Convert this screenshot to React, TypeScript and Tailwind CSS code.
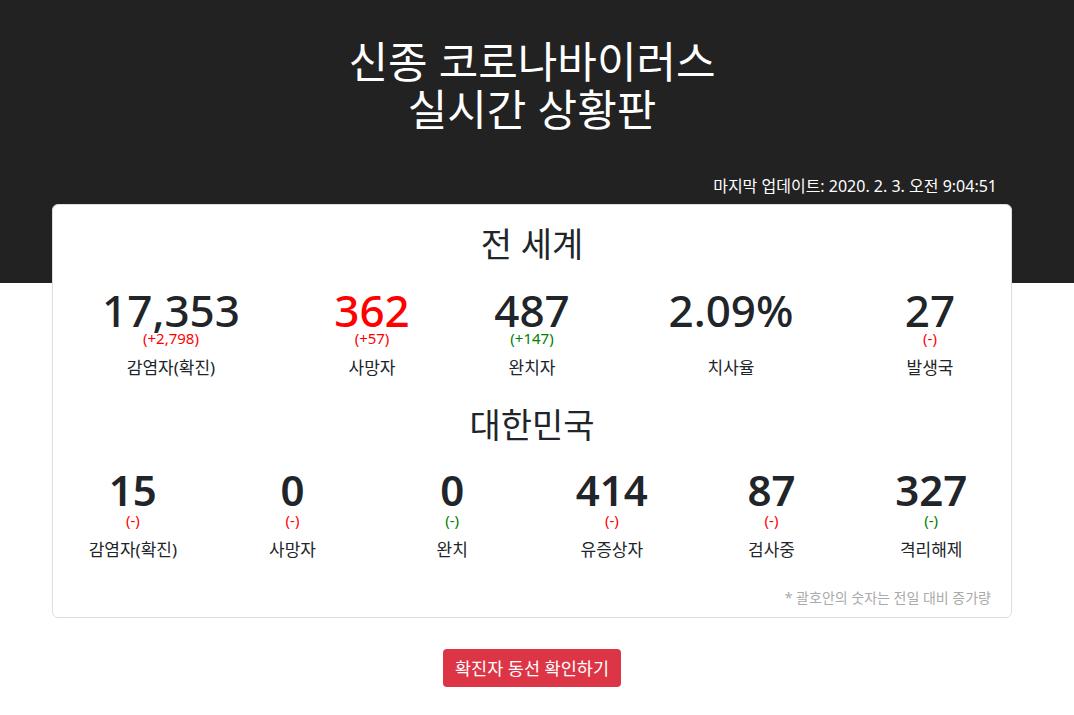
const FONT = '"Noto Sans", "Noto Sans CJK KR", sans-serif';

interface Stat {
  value: string;
  diff: string;
  diffColor: string;
  label: string;
  valueColor?: string;
}

const world: Stat[] = [
  { value: '17,353', diff: '(+2,798)', diffColor: 'text-[#ff0000]', label: '감염자(확진)' },
  { value: '362', diff: '(+57)', diffColor: 'text-[#ff0000]', label: '사망자', valueColor: 'text-[#ff0000]' },
  { value: '487', diff: '(+147)', diffColor: 'text-[#008000]', label: '완치자' },
  { value: '2.09%', diff: '', diffColor: '', label: '치사율' },
  { value: '27', diff: '(-)', diffColor: 'text-[#ff0000]', label: '발생국' },
];

const korea: Stat[] = [
  { value: '15', diff: '(-)', diffColor: 'text-[#ff0000]', label: '감염자(확진)' },
  { value: '0', diff: '(-)', diffColor: 'text-[#ff0000]', label: '사망자' },
  { value: '0', diff: '(-)', diffColor: 'text-[#008000]', label: '완치' },
  { value: '414', diff: '(-)', diffColor: 'text-[#ff0000]', label: '유증상자' },
  { value: '87', diff: '(-)', diffColor: 'text-[#ff0000]', label: '검사중' },
  { value: '327', diff: '(-)', diffColor: 'text-[#008000]', label: '격리해제' },
];

function StatItem({ s, bold }: { s: Stat; bold?: boolean }) {
  return (
    <div className="flex flex-col items-center">
      <div
        className={`${bold ? 'text-[42px] font-semibold' : 'text-[44px] font-medium'} leading-[42px] ${s.valueColor ?? 'text-[#212529]'}`}
      >
        {s.value}
      </div>
      <div className={`${bold ? 'mt-[2px]' : ''} h-[14px] text-[15px] leading-[14px] ${s.diffColor}`}>{s.diff}</div>
      <div className="mt-[13px] text-[17px] leading-[20px] text-[#212529]">{s.label}</div>
    </div>
  );
}

export default function App() {
  return (
    <div
      className="min-h-[715px] bg-[linear-gradient(to_bottom,#222222_283px,#ffffff_283px)] pr-[10px]"
      style={{ fontFamily: FONT }}
    >
      <div className="mx-auto w-[960px]">
        <h1 className="pt-[38px] text-center text-[43px] leading-[48px] text-white">
          신종 코로나바이러스
          <br />
          실시간 상황판
        </h1>

        <div className="mt-[42px] pr-[15px] text-right text-[16px] leading-[20px] text-white">
          마지막 업데이트: 2020. 2. 3. 오전 9:04:51
        </div>

        <div className="mt-[8px] rounded-md border border-[#dedede] bg-white pt-[20px] pb-[9px]">
          <h2 className="text-center text-[34px] leading-[38px] text-[#212529]">전 세계</h2>
          <div className="mt-[26px] grid grid-cols-[236px_166px_154px_244px_154px]">
            {world.map((s) => (
              <StatItem key={s.label} s={s} />
            ))}
          </div>

          <h2 className="mt-[28px] text-center text-[34px] leading-[38px] text-[#212529]">대한민국</h2>
          <div className="mt-[25px] grid grid-cols-6">
            {korea.map((s) => (
              <StatItem key={s.label} s={s} bold />
            ))}
          </div>

          <div className="mt-[28px] pr-[20px] text-right text-[14px] leading-[20px] text-[#aaaaaa]">
            * 괄호안의 숫자는 전일 대비 증가량
          </div>
        </div>

        <div className="mt-[31px] flex justify-center">
          <button className="h-[38px] rounded-[4px] bg-[#dc3545] px-[12px] text-[17.5px] leading-[24px] text-white">
            확진자 동선 확인하기
          </button>
        </div>
      </div>
    </div>
  );
}
